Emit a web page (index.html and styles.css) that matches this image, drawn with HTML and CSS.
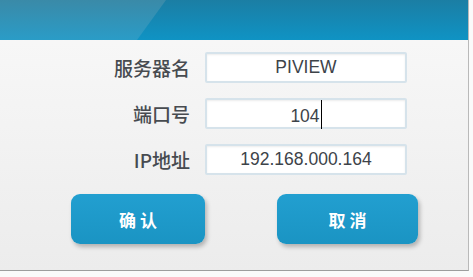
FILE: index.html
```html
<!DOCTYPE html>
<html lang="zh-CN">
<head>
    <meta charset="UTF-8">
    <title>服务器设置</title>
    <link rel="stylesheet" href="styles.css">
</head>
<body>
    <div class="dialog">
        <div class="dialog-header">
            <div class="header-shade"></div>
        </div>

        <div class="dialog-body">
            <div class="form-row">
                <label class="form-label">服务器名</label>
                <div class="form-field">PIVIEW</div>
            </div>
            <div class="form-row">
                <label class="form-label">端口号</label>
                <div class="form-field">104<span class="caret"></span></div>
            </div>
            <div class="form-row">
                <label class="form-label">IP地址</label>
                <div class="form-field">192.168.000.164</div>
            </div>

            <div class="button-row">
                <button class="btn btn-ok">确 认</button>
                <button class="btn btn-cancel">取 消</button>
            </div>
        </div>
    </div>
</body>
</html>
```

FILE: styles.css
```css
* {
    margin: 0;
    padding: 0;
    box-sizing: border-box;
}

body {
    background-color: #fafafa;
    font-family: "Liberation Sans", "Noto Sans CJK SC", sans-serif;
}

/* Dialog frame */
.dialog {
    width: 469px;
    height: 271px;
    background: linear-gradient(#f9f9f9, #ececec);
    border-right: 1px solid #b9b9b9;
    border-bottom: 1px solid #9d9d9d;
}

/* Header band */
.dialog-header {
    position: relative;
    height: 40px;
    background: linear-gradient(#1b7ea4, #0f93c4);
    overflow: hidden;
}

.header-shade {
    position: absolute;
    top: 0;
    left: 0;
    width: 166px;
    height: 40px;
    background: linear-gradient(#3a8aa8, #2a9cc7);
    clip-path: polygon(0 0, 166px 0, 137px 40px, 0 40px);
}

/* Form */
.dialog-body {
    padding-top: 12px;
}

.form-row {
    display: flex;
    align-items: center;
    height: 31px;
    margin-bottom: 15px;
}

.form-label {
    width: 190px;
    text-align: right;
    font-family: "Noto Sans CJK SC", sans-serif;
    font-size: 19px;
    font-weight: 500;
    color: #474b50;
    margin-right: 15px;
}

.form-field {
    width: 202px;
    height: 31px;
    background-color: #fff;
    border: 2px solid #d6e3eb;
    border-radius: 2px;
    box-shadow: inset 0 1px 2px rgba(0, 0, 0, 0.08);
    text-align: center;
    font-size: 17.5px;
    line-height: 27px;
    color: #3d4349;
}

.caret {
    display: inline-block;
    width: 1px;
    height: 29px;
    margin-left: 1px;
    vertical-align: -7px;
    background-color: #000;
}

/* Buttons */
.button-row {
    display: flex;
    padding-top: 4px;
}

.btn {
    height: 50px;
    border: none;
    border-radius: 9px;
    background: linear-gradient(#229fd0, #1a94c3);
    box-shadow: 2px 3px 4px rgba(0, 0, 0, 0.25);
    color: #fff;
    font-family: "Noto Sans CJK SC", sans-serif;
    font-size: 17px;
    font-weight: 700;
}

.btn-ok {
    width: 134px;
    margin-left: 71px;
}

.btn-cancel {
    width: 141px;
    margin-left: 72px;
}
```
